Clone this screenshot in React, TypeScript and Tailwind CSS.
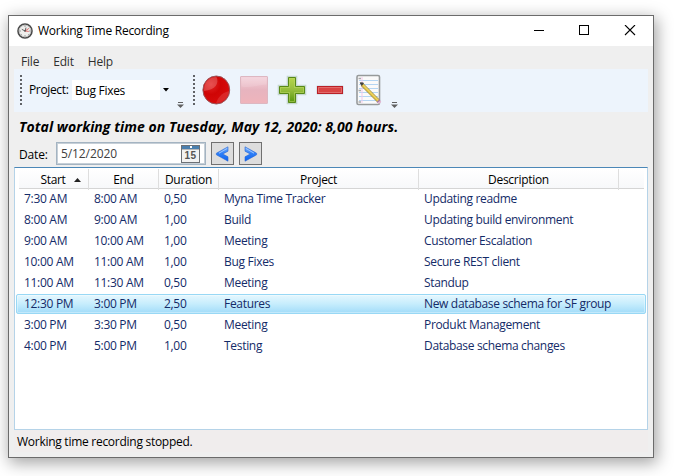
import React from "react";

type Entry = [string, string, string, string, string];

const entries: Entry[] = [
  ["7:30 AM", "8:00 AM", "0,50", "Myna Time Tracker", "Updating readme"],
  ["8:00 AM", "9:00 AM", "1,00", "Build", "Updating build environment"],
  ["9:00 AM", "10:00 AM", "1,00", "Meeting", "Customer Escalation"],
  ["10:00 AM", "11:00 AM", "1,00", "Bug Fixes", "Secure REST client"],
  ["11:00 AM", "11:30 AM", "0,50", "Meeting", "Standup"],
  ["12:30 PM", "3:00 PM", "2,50", "Features", "New database schema for SF group"],
  ["3:00 PM", "3:30 PM", "0,50", "Meeting", "Produkt Management"],
  ["4:00 PM", "5:00 PM", "1,00", "Testing", "Database schema changes"],
];

const columns = "grid grid-cols-[70px_70px_60px_200px_200px_1fr]";

function Clock() {
  return (
    <svg width="16" height="16" viewBox="0 0 16 16">
      <circle cx="8" cy="8" r="7" fill="#eeeeec" stroke="#4a4a4a" strokeWidth="1.6" />
      <circle cx="8" cy="8" r="5.8" fill="none" stroke="#b5b5b5" strokeWidth="0.7" />
      <path d="M8 2.5v1.5M8 12v1.5M2.5 8H4M12 8h1.5M4.2 11.8l.8-.8M11.8 11.8l-.8-.8" stroke="#888" strokeWidth="0.8" />
      <path d="M8 8 11.9 5.4M8 8l3.8.4" stroke="#d94b4b" strokeWidth="0.8" />
      <path d="M4.8 6.3 8 8l1-3.4" fill="none" stroke="#555" strokeWidth="0.9" />
      <circle cx="8" cy="8" r=".8" fill="#444" />
    </svg>
  );
}

function Grip() {
  return (
    <svg width="3" height="32" viewBox="0 0 3 32" shapeRendering="crispEdges">
      <path d="M1 1v30" stroke="#606266" strokeWidth="2" strokeDasharray="2 2" />
    </svg>
  );
}

function Overflow() {
  return (
    <svg width="7" height="6" viewBox="0 0 7 6">
      <path d="M1 .5h5" stroke="#606060" />
      <path d="M0 2.5h7L3.5 6z" fill="#606060" />
    </svg>
  );
}

function Arrow({ left = false }: { left?: boolean }) {
  return (
    <span className="flex h-[23px] w-[23px] items-center justify-center border border-[#707070] bg-[#dddddd]">
      <svg width="15" height="16" viewBox="0 0 15 16" className={left ? "" : "-scale-x-100"}>
        <defs>
          <linearGradient id="arrowBlue" x2="0" y2="1">
            <stop stopColor="#7fb6ff" />
            <stop offset=".45" stopColor="#2f80f8" />
            <stop offset="1" stopColor="#0b63f0" />
          </linearGradient>
        </defs>
        <path d="M13 .8v4.4L7.8 8l5.2 2.8v4.4L1.4 8.8V7.2z" fill="url(#arrowBlue)" stroke="#2a66d4" strokeWidth="0.6" strokeLinejoin="round" />
        <path d="M12.2 2.4 4 7.2" stroke="#a5ccff" strokeWidth="0.9" />
      </svg>
    </span>
  );
}

function RecordIcon() {
  return (
    <svg width="30" height="32" viewBox="0 0 30 32">
      <defs>
        <radialGradient id="redBall" cx=".3" cy=".3" r=".8">
          <stop stopColor="#e32424" />
          <stop offset=".45" stopColor="#cf0505" />
          <stop offset="1" stopColor="#d90d0d" />
        </radialGradient>
      </defs>
      <ellipse cx="15.3" cy="16" rx="13.4" ry="14" fill="url(#redBall)" stroke="#99575c" strokeWidth="1" />
      <path d="M3 16C3 7 9 3 15.5 3c3 6-1 13-12.4 14z" fill="#fff" opacity=".2" />
      <path d="M28 17c-1 8-7 12-13 12 2-5 5-10 13-12z" fill="#fff" opacity=".12" />
    </svg>
  );
}

function StopIcon() {
  return (
    <svg width="30" height="32" viewBox="0 0 30 32">
      <defs>
        <linearGradient id="stopPink" x2="0" y2="1">
          <stop stopColor="#f4d3dc" />
          <stop offset=".5" stopColor="#e7b4bf" />
          <stop offset="1" stopColor="#efb4bb" />
        </linearGradient>
      </defs>
      <rect x="1.5" y="2.5" width="27" height="27" rx=".5" fill="url(#stopPink)" stroke="#ddb7c1" />
      <path d="M2.5 12.5c9 2 18-2 25-2v-7h-25z" fill="#fff" opacity=".12" />
    </svg>
  );
}

function PlusIcon() {
  return (
    <svg width="30" height="32" viewBox="0 0 30 32">
      <defs>
        <linearGradient id="plusGreen" x2="0" y2="1">
          <stop stopColor="#b6d64b" />
          <stop offset=".5" stopColor="#95bd3c" />
          <stop offset="1" stopColor="#56960c" />
        </linearGradient>
      </defs>
      <path d="M11 3h8v9h9v8h-9v9h-8v-9H2v-8h9z" fill="none" stroke="#c6d8cf" strokeWidth="2.6" />
      <path d="M11.5 3.5h7v9h9v7h-9v9h-7v-9h-9v-7h9z" fill="url(#plusGreen)" stroke="#588917" />
      <path d="M12.5 4.5h5v9h9v5h-9v9h-5v-9h-9v-5h9z" fill="none" stroke="#bad869" strokeWidth=".8" opacity=".7" />
    </svg>
  );
}

function MinusIcon() {
  return (
    <svg width="30" height="32" viewBox="0 0 30 32">
      <rect x="1.5" y="11.5" width="27" height="9" rx="1" fill="#c9d1da" />
      <rect x="2.5" y="12.5" width="25" height="7" fill="#d94444" stroke="#b92028" />
      <path d="M3.5 13.5h23v5h-23z" fill="none" stroke="#e57474" strokeWidth=".8" />
    </svg>
  );
}

function NoteIcon() {
  return (
    <svg width="30" height="32" viewBox="0 0 30 32">
      <rect x="4" y="1.5" width="22.5" height="29" rx="1.5" fill="#fafafa" stroke="#969a9b" strokeWidth="1.6" />
      <path d="M6 6.5h19M6 10.5h19M6 14.5h19M6 18.5h19M6 22.5h19M6 26.5h19" stroke="#b4d5f3" />
      <path d="M9 3v26" stroke="#f4c9ea" />
      <path d="M5.5 4.5H8M5.5 16.5H8M5.5 28H8" stroke="#aaa" strokeWidth="1.5" />
      <path d="m9 10.5 16.5 16.5" stroke="#98833e" strokeWidth="3.6" />
      <path d="m9 10.5 16.5 16.5" stroke="#e5c84c" strokeWidth="2.4" />
      <path d="m10.5 11 15 15.2" stroke="#f6e383" strokeWidth=".7" />
      <path d="m7.2 8.8 3.2.2-1.6 2.4z" fill="#3d3d3d" stroke="#444" />
      <path d="m25 26.7 1 1" stroke="#a77aa1" strokeWidth="4" />
      <path d="m26 27.7 1.2 1.2" stroke="#e8b0d0" strokeWidth="3" />
    </svg>
  );
}

function CalendarIcon() {
  return (
    <span className="flex h-[18px] w-[19px] flex-col border border-[#6c7075] bg-[#f2f2f2]">
      <span className="flex h-[4px] items-center justify-center bg-[#4a7fae]">
        <span className="h-[2px] w-[2px] bg-white" />
      </span>
      <span className="h-px bg-[#b8b8b8]" />
      <span className="text-center font-['Liberation_Sans',sans-serif] text-[10px] leading-[12px] font-bold tracking-[0.5px] text-[#555555]">15</span>
    </span>
  );
}

export default function App() {
  return (
    <div className="h-[476px] w-[674px] overflow-hidden bg-white pt-[15px] pl-2 font-['Open_Sans','Noto_Sans',sans-serif] text-[12px] leading-4 tracking-[-0.3px] whitespace-nowrap text-black">
      <div className="flex h-[443px] w-[646px] flex-col border border-[#6b6b6b] bg-[#efefef] shadow-[2px_4px_15px_1px_rgba(0,0,0,0.36)]">
        <header className="flex h-[30px] shrink-0 items-center bg-white pl-2">
          <Clock />
          <span className="ml-[5px] tracking-[-0.26px]">Working Time Recording</span>
          <svg className="mr-[-1px] ml-auto" width="121" height="12" viewBox="0 0 121 12" shapeRendering="crispEdges">
            <path d="M1 5.5h10" stroke="#000" />
            <path d="M46.5 .5h9v9h-9z" fill="none" stroke="#000" />
            <path d="m92 0 10 10M102 0 92 10" stroke="#000" strokeWidth="1.1" shapeRendering="geometricPrecision" />
          </svg>
        </header>
        <nav className="flex h-[23px] shrink-0 items-center gap-[14px] pt-[8px] pl-3 tracking-[-0.2px] text-[#303030]">
          <span>File</span><span>Edit</span><span>Help</span>
        </nav>
        <div className="mx-[5px] flex h-[43px] shrink-0 bg-[#edf4fc]">
          <div className="flex w-[174px] pt-[5px] pl-[6px]">
            <Grip />
            <span className="mt-[8px] ml-[6px] w-[43px] tracking-[-0.35px]">Project:</span>
            <div className="mt-[6px] flex h-5 w-[100px] bg-white pl-[3px] leading-[22px]">
              <span>Bug Fixes</span>
              <span className="ml-auto flex w-[12px] items-center justify-center bg-[#edf4fc]">
                <svg width="6" height="4" viewBox="0 0 6 4"><path d="M0 0h6L3 3.5z" fill="#000" /></svg>
              </span>
            </div>
            <span className="mt-[28px] ml-[5px] shrink-0"><Overflow /></span>
          </div>
          <div className="flex pt-[5px] pl-[5px]">
            <Grip />
            <div className="ml-[5px] flex gap-2">
              <RecordIcon /><StopIcon /><PlusIcon /><MinusIcon /><NoteIcon />
            </div>
            <span className="mt-[28px] ml-[8px]"><Overflow /></span>
          </div>
        </div>
        <h1 className="h-[29px] shrink-0 pt-[7px] pl-[10px] text-[14px] font-bold tracking-[0.06px] italic">
          Total working time on Tuesday, May 12, 2020: 8,00 hours.
        </h1>
        <div className="flex h-[26px] shrink-0 pl-[10px]">
          <span className="w-[37px] pt-[6px] tracking-[-0.15px]">Date:</span>
          <div className="mt-px flex h-[23px] w-[150px] items-center border-2 border-[#c6cfd7] bg-white pr-[4px] pl-[3px] text-[#404040] outline outline-1 outline-offset-[-1px] outline-[#a4b4c2]">
            <span className="tracking-[-0.1px]">5/12/2020</span>
            <span className="ml-auto"><CalendarIcon /></span>
          </div>
          <div className="mt-px ml-[5px] flex gap-[5px]"><Arrow left /><Arrow /></div>
        </div>
        <main className="mx-[5px] h-[263px] shrink-0 border border-[#b5d3e8] border-t-[#4b87b7] bg-white px-px pt-px">
          <div className={`mr-[2px] ml-[3px] h-5 border-b border-[#d5d5d5] bg-gradient-to-b from-white to-[#f7f8fa] text-center leading-[21px] ${columns}`}>
            <span className="flex items-center justify-center border-r border-[#dedede] pl-[14px]">
              Start
              <svg className="ml-[8px]" width="7" height="4" viewBox="0 0 7 4"><path d="M0 4h7L3.5 0z" fill="#222" /></svg>
            </span>
            <span className="border-r border-[#dedede]">End</span>
            <span className="border-r border-[#dedede]">Duration</span>
            <span className="border-r border-[#dedede]">Project</span>
            <span className="border-r border-[#dedede]">Description</span>
          </div>
          {entries.map((entry, index) => (
            <div
              key={index}
              className={`mb-px h-5 rounded-[2px] border px-px leading-[18px] text-[#142b68] ${columns} ${
                index === 5
                  ? "border-[#98d8f5] bg-gradient-to-b from-[#e5f7fe] via-[#c6edfd] to-[#a2dcf9] shadow-[inset_0_0_0_1px_rgba(255,255,255,0.35)]"
                  : "border-transparent"
              }`}
            >
              {entry.map((value, cell) => (
                <span key={cell} className={cell === 4 ? "pl-[6px] tracking-[-0.33px]" : "pl-[6px]"}>{value}</span>
              ))}
            </div>
          ))}
        </main>
        <footer className="mx-[5px] h-[22px] bg-[#f0eded] pt-[4px] pl-[3px] tracking-[-0.27px]">Working time recording stopped.</footer>
      </div>
    </div>
  );
}
